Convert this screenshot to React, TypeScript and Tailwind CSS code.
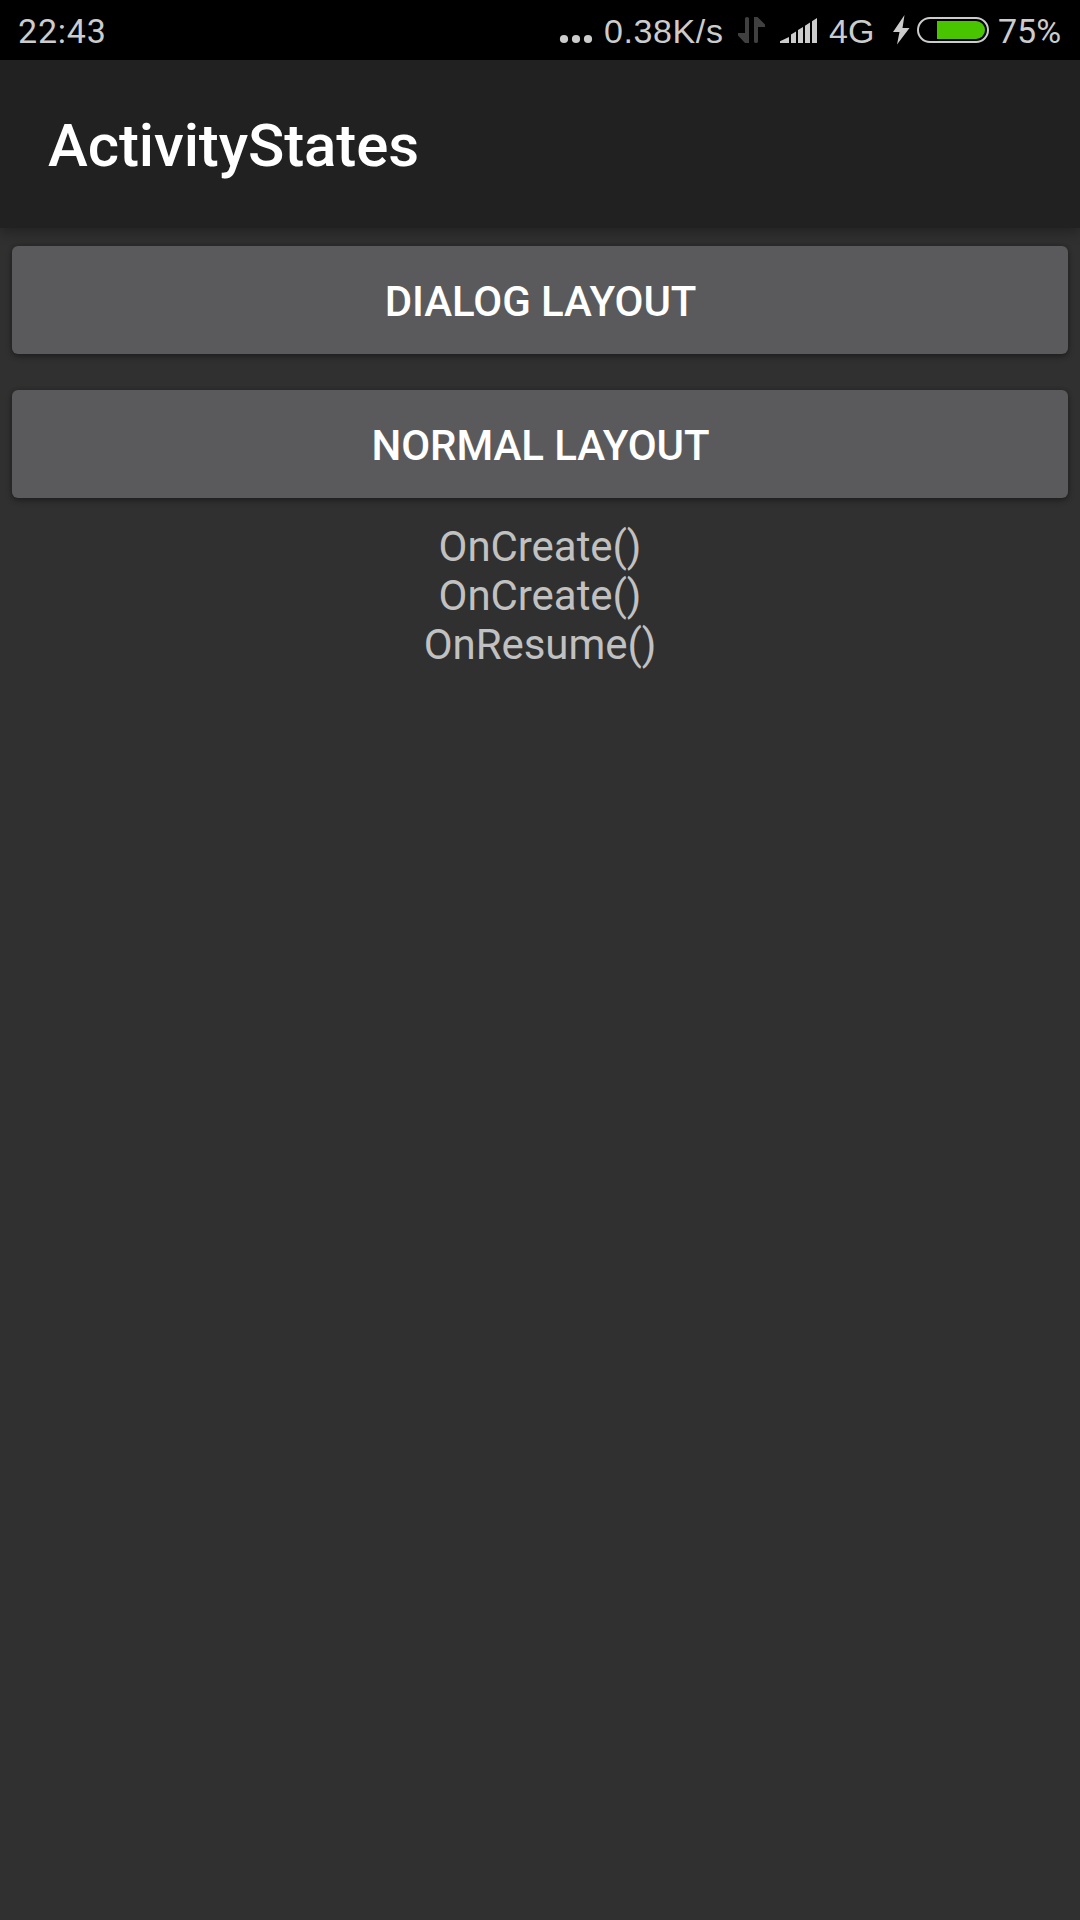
import React from "react";

function StatusBar() {
  return (
    <header className="flex h-[60px] items-center bg-black pl-[18px] text-[34px] leading-[60px] whitespace-nowrap text-[#cccccc]">
      <span className="w-[541px] pt-[2px] tracking-[0.8px]">22:43</span>
      <svg className="mr-[11px] h-[60px] w-[34px]" viewBox="559 0 34 60" fill="#cccccc">
        <circle cx="564" cy="39" r="4.1" />
        <circle cx="576" cy="39" r="4.1" />
        <circle cx="588" cy="39" r="4.1" />
      </svg>
      <span className="w-[132px] pt-[2px] font-['Liberation_Sans',sans-serif] tracking-[0.6px]">0.38K/s</span>
      <svg className="h-[60px] w-[84px]" viewBox="736 0 84 60">
        <path fill="#404040" d="M745 18.5q0-1.5 2-1.5t2 1.5V43h-4L738 35.500V33h7zM754 43q0 0 0 0V17h3.500L765 24.500V27h-7V41.500q0 1.500-2 1.500t-2-1.500z" />
        <path fill="#cccccc" d="M780 43v-1.700L789 37v6zM791 43V34.500L796 31.500V43zM798 43V30L803 27V43zM805 43V25.800L810 22.500V43zM812 43V21.200L817 18V43z" />
      </svg>
      <span className="ml-[9px] w-[62px] pt-[2px] font-['Liberation_Sans',sans-serif]">4G</span>
      <svg className="h-[60px] w-[100px]" viewBox="891 0 100 60">
        <path fill="#cccccc" d="M904.500 15L893 32h6.500L897 44.500L909.500 28h-7z" />
        <rect x="918" y="18" width="70" height="24" rx="12" fill="none" stroke="#cccccc" strokeWidth="2" />
        <path fill="#48c400" d="M937 21h39a9 9 0 0 1 0 18h-39z" />
      </svg>
      <span className="ml-[7px] pt-px">75%</span>
    </header>
  );
}

function LayoutButton({ children }: { children: React.ReactNode }) {
  return (
    <button className="h-[108px] w-full rounded-[6px] bg-[#5a5a5c] pt-[3px] pl-px text-center text-[42px] font-medium tracking-[-0.06px] text-white shadow-[0_3px_6px_rgba(0,0,0,0.3),0_0_4px_rgba(0,0,0,0.2)]">
      {children}
    </button>
  );
}

export default function App() {
  const events = ["OnCreate()", "OnCreate()", "OnResume()"];
  return (
    <div className="flex h-[1920px] w-[1080px] flex-col overflow-hidden bg-[#303030] font-['Roboto',sans-serif]">
      <StatusBar />
      <div className="relative flex h-[168px] shrink-0 items-center bg-[#212121] px-12 pt-[4px] shadow-[0_4px_12px_rgba(0,0,0,0.3)]">
        <h1 className="text-[60px] font-medium tracking-[-0.1px] text-white">ActivityStates</h1>
      </div>
      <main className="flex flex-col gap-9 px-3 pt-[18px]">
        <LayoutButton>DIALOG LAYOUT</LayoutButton>
        <LayoutButton>NORMAL LAYOUT</LayoutButton>
      </main>
      <div className="mt-6 text-center text-[42px] leading-[49px] tracking-[-0.05px] text-[#c1c1c1]">
        {events.map((event, i) => (
          <p key={i}>{event}</p>
        ))}
      </div>
    </div>
  );
}
